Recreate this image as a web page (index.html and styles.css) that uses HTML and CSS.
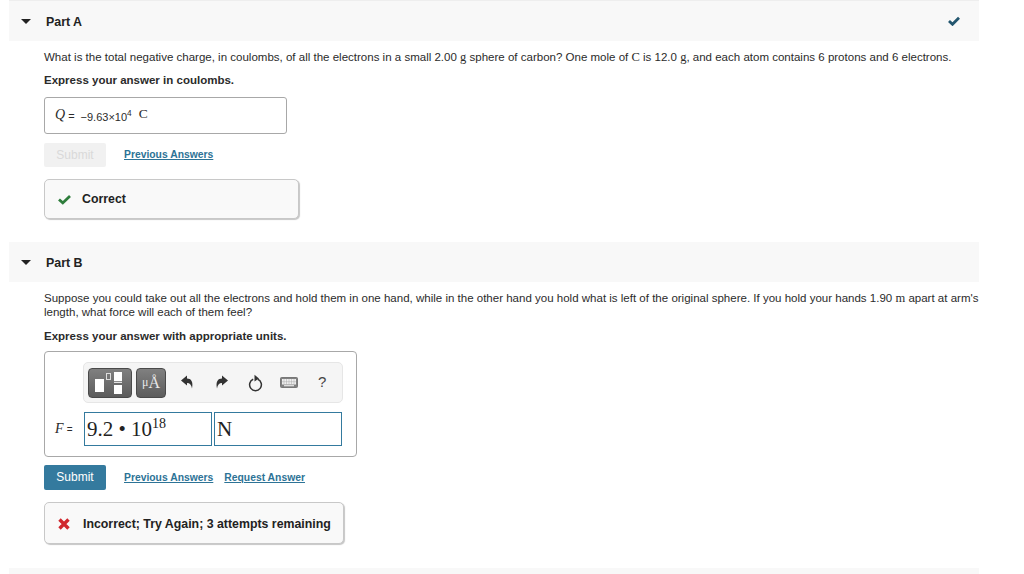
FILE: index.html
```html
<!DOCTYPE html>
<html lang="en">
<head>
<meta charset="utf-8">
<title>Parts</title>
<link rel="stylesheet" href="styles.css">
</head>
<body>
<main class="page">
  <section class="part part-a">
    <header class="part-head">
      <span class="caret"></span>
      <h2 class="part-title">Part A</h2>
      <svg class="head-check" width="12" height="10" viewBox="0 0 12 10"><path d="M1 5l3.500 3.300L11 1.800" fill="none" stroke="#23566f" stroke-width="2.800"/></svg>
    </header>
    <div class="part-body">
      <p class="question">What is the total negative charge, in coulombs, of all the electrons in a small 2.00 <span class="serif">g</span> sphere of carbon? One mole of <span class="serif">C</span> is 12.0 <span class="serif">g</span>, and each atom contains 6 protons and 6 electrons.</p>
      <p class="instruct">Express your answer in coulombs.</p>
      <div class="answer-box">
        <span class="var">Q</span><span class="eq">=</span><span class="value">−9.63×10<sup>4</sup></span><span class="unit">C</span>
      </div>
      <div class="actions">
        <button class="btn btn-off">Submit</button>
        <a class="link" href="#">Previous Answers</a>
      </div>
      <div class="feedback feedback-ok">
        <svg class="fb-icon" width="13" height="11" viewBox="0 0 13 11"><path d="M1 5.500l3.800 3.400L12 2" fill="none" stroke="#2e7d3c" stroke-width="2.800"/></svg>
        <span>Correct</span>
      </div>
    </div>
  </section>

  <section class="part part-b">
    <header class="part-head">
      <span class="caret"></span>
      <h2 class="part-title">Part B</h2>
    </header>
    <div class="part-body">
      <p class="question">Suppose you could take out all the electrons and hold them in one hand, while in the other hand you hold what is left of the original sphere. If you hold your hands 1.90 <span class="serif">m</span> apart at arm's length, what force will each of them feel?</p>
      <p class="instruct">Express your answer with appropriate units.</p>
      <div class="editor">
        <div class="toolbar">
          <span class="tool tool-wide">
            <svg width="42" height="28" viewBox="0 0 42 28"><rect x="6" y="10" width="9" height="13" fill="#fff"/><rect x="17.500" y="4.500" width="4" height="6" fill="none" stroke="#ddd"/><rect x="25" y="3" width="8" height="9" fill="#fff"/><rect x="25" y="12.800" width="8" height="1" fill="#fff"/><rect x="25" y="16" width="8" height="9" fill="#fff"/></svg>
          </span>
          <span class="tool tool-unit"><span class="mu">μ</span><span class="ang">Å</span></span>
          <svg class="ic ic-undo" width="13" height="14" viewBox="0 0 13 14"><path d="M0 5.500L6 0.500V3.500C10 3.500 12.500 6.500 11 13.500C10.500 10 9 8 6 8V10.500z" fill="#333"/></svg>
          <svg class="ic ic-redo" width="13" height="14" viewBox="0 0 13 14"><path d="M13 5.500L7 0.500V3.500C3 3.500 0.500 6.500 2 13.500C2.500 10 4 8 7 8V10.500z" fill="#333"/></svg>
          <svg class="ic ic-reset" width="15" height="18" viewBox="0 0 15 18"><path d="M9.800 5.300a5.900 5.900 0 1 1-4.600 0" fill="none" stroke="#333" stroke-width="1.500"/><path d="M6.500 0.800l4.500 3.700L6.500 7.500z" fill="#333"/></svg>
          <svg class="ic ic-keys" width="18" height="11" viewBox="0 0 18 11"><rect x="0.500" y="0.500" width="17" height="10" rx="1" fill="#808080" stroke="#777"/><rect x="2" y="2" width="14" height="5.500" fill="#eee"/><path d="M4 2v5.500M6.500 2v5.500M9 2v5.500M11.500 2v5.500M14 2v5.500M2 4.700h14" stroke="#aaa" stroke-width="0.500"/><rect x="4" y="8" width="10" height="1.300" fill="#ddd"/></svg>
          <span class="help">?</span>
        </div>
        <div class="entry-row">
          <span class="entry-label"><span class="var">F</span> <span class="eq-small">=</span></span>
          <span class="entry">9.2 • 10<sup>18</sup></span>
          <span class="entry">N</span>
        </div>
      </div>
      <div class="actions actions-b">
        <button class="btn">Submit</button>
        <a class="link" href="#">Previous Answers</a>
        <a class="link" href="#">Request Answer</a>
      </div>
      <div class="feedback feedback-bad">
        <svg class="fb-icon" width="12" height="12" viewBox="0 0 12 12"><path d="M1.500 1.500l9 9M10.500 1.500l-9 9" fill="none" stroke="#d0282e" stroke-width="3.400"/></svg>
        <span>Incorrect; Try Again; 3 attempts remaining</span>
      </div>
    </div>
  </section>

  <div class="next-bar"></div>
</main>
</body>
</html>
```

FILE: styles.css
```css
* { box-sizing: border-box; }
html, body { margin: 0; height: 574px; overflow: hidden; background: #fff; }
body { font-family: "Liberation Sans", Arial, sans-serif; color: #2b2b2b; font-size: 11.520px; }
.page { margin-left: 9px; width: 970px; }
p { margin: 0; }
.serif { font-family: "Liberation Serif", serif; font-size: 12.500px; }
.part-a { border-top: 1px solid #eeeeee; }
.part-head { height: 40px; background: #f8f8f8; display: flex; align-items: center; padding-left: 12px; }
.caret { width: 0; height: 0; border-left: 5px solid transparent; border-right: 5px solid transparent; border-top: 5px solid #222; }
.part-title { margin: 1px 0 0 15px; font-size: 12.400px; font-weight: 700; color: #222; }
.head-check { margin-left: auto; margin-right: 19px; }
.part-body { padding-left: 35px; }
.question { line-height: 13px; margin-right: -4px; }
.part-a .question { margin-top: 10px; }
.part-b .question { margin-top: 9px; line-height: 14px; }
.instruct { font-weight: 700; margin-top: 10px; line-height: 13px; }
.part-b .instruct { margin-top: 11px; }
.answer-box { margin-top: 10px; width: 243px; height: 37px; border: 1px solid #a8a8a8; border-radius: 3px; display: flex; align-items: center; padding-left: 10px; }
.answer-box .var { margin-bottom: 2px; }
.var { font-family: "Liberation Serif", serif; font-style: italic; font-size: 14px; }
.eq { margin: 0 6px 0 3px; font-size: 11px; }
.value { font-size: 11px; position: relative; top: 1px; }
sup { font-size: 75%; line-height: 0; }
.unit { font-family: "Liberation Serif", serif; font-size: 13.500px; margin: 0 0 3px 7px; }
.actions { display: flex; align-items: center; margin-top: 9px; }
.btn { width: 62px; height: 25px; border: 0; border-radius: 2px; background: #347a9e; color: #fff; font: 12px "Liberation Sans", Arial, sans-serif; padding: 0 0 1px; }
.btn-off { background: #f1f1f1; color: #d9d9d9; height: 24px; padding: 0; }
.link { font-size: 10.350px; font-weight: 700; color: #2d7396; text-decoration: underline; margin-left: 18px; position: relative; top: -1px; }
.link + .link { margin-left: 11px; }
.actions-b .link { top: 0; }
.feedback { display: flex; align-items: center; border: 1px solid #c8c8c8; border-radius: 5px; background: #f9f9f9; box-shadow: 1px 1px 1px #c6c6c6; font-size: 12.350px; font-weight: 700; color: #222; }
.feedback-ok { margin-top: 12px; width: 255px; height: 40px; padding-left: 13px; }
.feedback-ok .fb-icon { margin-right: 11px; }
.feedback-bad { margin-top: 12px; width: 300px; height: 42px; padding: 1px 0 0 13px; }
.feedback-bad .fb-icon { margin-right: 13px; }
.part-b { margin-top: 23px; }
.editor { margin-top: 8px; width: 313px; height: 106px; border: 1px solid #a8a8a8; border-radius: 4px; padding: 10px 10px 0 10px; }
.toolbar { margin-left: 28px; width: 260px; height: 41px; background: #f5f5f5; border: 1px solid #e6e6e6; border-radius: 5px; display: flex; align-items: center; padding-left: 4px; }
.tool { height: 30px; border-radius: 4px; background: linear-gradient(#808080, #5c5c5c); border: 1px solid #4a4a4a; display: flex; align-items: center; justify-content: center; color: #fff; }
.tool-wide { width: 44px; }
.tool-unit { width: 30px; margin-left: 4px; font-family: "Liberation Serif", serif; font-size: 16px; color: #e8e8e8; }
.mu { font-size: 12px; }
.ic { flex: none; }
.ic-undo { margin: 0 0 2px 15px; }
.ic-redo { margin: 0 0 2px 21px; }
.ic-reset { margin-left: 20px; }
.ic-keys { margin-left: 17px; }
.help { margin: 0 0 2px 20px; font-size: 15px; color: #444; }
.entry-row { display: flex; align-items: center; margin-top: 9px; }
.entry-label { flex: none; width: 29px; font-size: 11px; }
.eq-small { font-size: 10px; }
.entry { flex: none; width: 128px; height: 34px; border: 1px solid #347a9e; font-family: "Liberation Serif", serif; font-size: 21px; line-height: 33px; padding-left: 2px; color: #222; background: #fff; }
.entry + .entry { margin-left: 2px; }
.entry sup { font-size: 14px; }
.actions-b { margin-top: 8px; }
.next-bar { margin-top: 24px; height: 6px; background: #f8f8f8; }
```
